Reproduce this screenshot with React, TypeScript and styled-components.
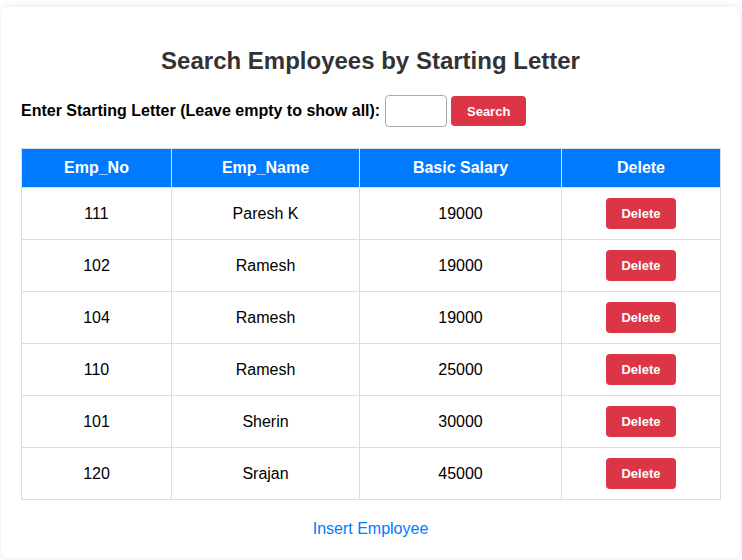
import { createGlobalStyle, styled } from 'styled-components';

type Employee = {
    empNo: number;
    name: string;
    salary: number;
};

const employees: Employee[] = [
    { empNo: 111, name: 'Paresh K', salary: 19000 },
    { empNo: 102, name: 'Ramesh', salary: 19000 },
    { empNo: 104, name: 'Ramesh', salary: 19000 },
    { empNo: 110, name: 'Ramesh', salary: 25000 },
    { empNo: 101, name: 'Sherin', salary: 30000 },
    { empNo: 120, name: 'Srajan', salary: 45000 },
];

const columns = [
    { label: 'Emp_No', width: 150 },
    { label: 'Emp_Name', width: 188 },
    { label: 'Basic Salary', width: 202 },
    { label: 'Delete', width: 159 },
];

export default function App() {
    return (
        <>
            <GlobalStyle />
            <Card>
                <Title>Search Employees by Starting Letter</Title>
                <SearchForm onSubmit={(e) => e.preventDefault()}>
                    <Label htmlFor="letter">Enter Starting Letter (Leave empty to show all):</Label>
                    <LetterInput id="letter" type="text" maxLength={1} />
                    <RedButton type="submit" $height={30} $width={75}>
                        Search
                    </RedButton>
                </SearchForm>
                <Table>
                    <colgroup>
                        {columns.map((c) => (
                            <col key={c.label} style={{ width: c.width }} />
                        ))}
                    </colgroup>
                    <thead>
                        <tr>
                            {columns.map((c) => (
                                <HeadCell key={c.label}>{c.label}</HeadCell>
                            ))}
                        </tr>
                    </thead>
                    <tbody>
                        {employees.map((emp) => (
                            <tr key={emp.empNo}>
                                <Cell>{emp.empNo}</Cell>
                                <Cell>{emp.name}</Cell>
                                <Cell>{emp.salary}</Cell>
                                <Cell>
                                    <RedButton type="button" $height={31} $width={70}>
                                        Delete
                                    </RedButton>
                                </Cell>
                            </tr>
                        ))}
                    </tbody>
                </Table>
                <Footer>
                    <InsertLink href="#">Insert Employee</InsertLink>
                </Footer>
            </Card>
        </>
    );
}

const GlobalStyle = createGlobalStyle`
    body {
        margin: 0;
        background: #ffffff;
        font-family: "Liberation Sans", Arial, sans-serif;
    }
`;

const Card = styled.div`
    margin: 7px 2px 3px 1px;
    padding: 20px;
    background: #ffffff;
    border-radius: 8px;
    box-shadow: 0 0 10px rgba(0, 0, 0, 0.1);
`;

const Title = styled.h2`
    margin: 20px 0;
    text-align: center;
    font-size: 24px;
    font-weight: 700;
    color: #333333;
`;

const SearchForm = styled.form`
    display: flex;
    align-items: center;
    margin: 0 0 21px;
`;

const Label = styled.label`
    font-size: 16px;
    font-weight: 700;
    color: #000000;
    margin-right: 5px;
`;

const LetterInput = styled.input`
    box-sizing: border-box;
    width: 62px;
    height: 32px;
    padding: 6px 8px;
    border: 1px solid #aaaaaa;
    border-radius: 4px;
    font-size: 16px;
    margin-right: 4px;
`;

const RedButton = styled.button<{ $height: number; $width: number }>`
    box-sizing: border-box;
    width: ${(p) => p.$width}px;
    height: ${(p) => p.$height}px;
    padding: 0;
    border: none;
    border-radius: 4px;
    background: #dc3545;
    color: #ffffff;
    font-family: "Liberation Sans", Arial, sans-serif;
    font-size: 13px;
    font-weight: 700;
    cursor: pointer;
`;

const Table = styled.table`
    width: 100%;
    table-layout: fixed;
    border-collapse: collapse;
`;

const HeadCell = styled.th`
    height: 39px;
    padding: 0 10px;
    background: #007bff;
    color: #ffffff;
    font-size: 16px;
    font-weight: 700;
    text-align: center;
    border: 1px solid #dddddd;
    box-sizing: border-box;
`;

const Cell = styled.td`
    height: 52px;
    padding: 0 10px;
    font-size: 16px;
    color: #000000;
    text-align: center;
    border: 1px solid #dddddd;
    box-sizing: border-box;
`;

const Footer = styled.div`
    margin-top: 20px;
    text-align: center;
`;

const InsertLink = styled.a`
    font-size: 16px;
    color: #007bff;
    text-decoration: none;
`;
